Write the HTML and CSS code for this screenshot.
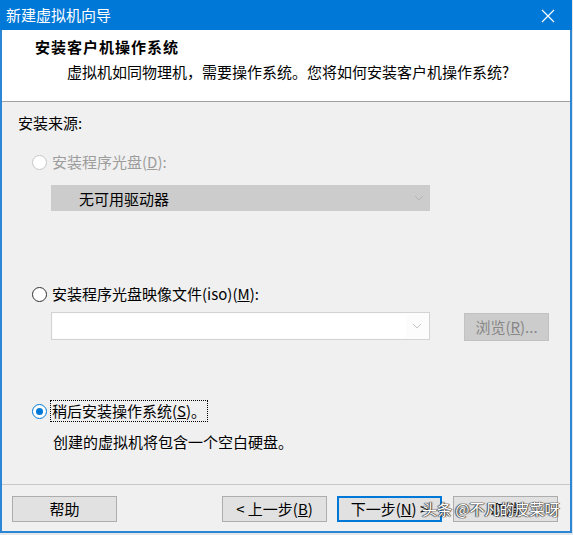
FILE: index.html
```html
<!DOCTYPE html>
<html lang="zh-CN">
<head>
    <meta charset="UTF-8">
    <title>新建虚拟机向导</title>
    <link rel="stylesheet" href="styles.css">
</head>
<body>

    <div class="window">

        <div class="titlebar">
            <span class="title">新建虚拟机向导</span>
            <svg class="close" width="14" height="14" viewBox="0 0 14 14">
                <path d="M1 1 L13 13 M13 1 L1 13" stroke="#fff" stroke-width="1.2" fill="none"/>
            </svg>
        </div>

        <div class="header">
            <h1>安装客户机操作系统</h1>
            <p>虚拟机如同物理机，需要操作系统。您将如何安装客户机操作系统?</p>
        </div>

        <div class="content">

            <p class="label">安装来源:</p>

            <div class="option disabled first">
                <span class="radio"></span>
                <span>安装程序光盘(<u>D</u>):</span>
            </div>

            <div class="select disabled-select">
                <span>无可用驱动器</span>
                <svg class="chev" width="10" height="6" viewBox="0 0 10 6">
                    <path d="M1 1 L5 5 L9 1" stroke="#b4b4b4" fill="none"/>
                </svg>
            </div>

            <div class="option second">
                <span class="radio"></span>
                <span>安装程序光盘映像文件(iso)(<u>M</u>):</span>
            </div>

            <div class="iso-row">
                <div class="combo">
                    <div class="field"></div>
                    <div class="arrow">
                        <svg width="10" height="6" viewBox="0 0 10 6">
                            <path d="M1 1 L5 5 L9 1" stroke="#c4c4c4" fill="none"/>
                        </svg>
                    </div>
                </div>
                <div class="browse">浏览(<u>R</u>)...</div>
            </div>

            <div class="option third">
                <span class="radio checked"></span>
                <span class="focus">稍后安装操作系统(<u>S</u>)。</span>
            </div>

            <p class="note">创建的虚拟机将包含一个空白硬盘。</p>

        </div>

        <div class="footer">
            <div class="btn">帮助</div>
            <div class="spacer"></div>
            <div class="btn">&lt; 上一步(<u>B</u>)</div>
            <div class="btn default">下一步(<u>N</u>) &gt;</div>
            <div class="btn">取消</div>
            <span class="watermark">头条 @不凡的皮菜呀</span>
        </div>

    </div>

</body>
</html>
```

FILE: styles.css
```css
html, body {
    margin: 0;
    padding: 0;
    background: #e6e6e6;
}

body {
    width: 573px;
    height: 535px;
    font-family: "Noto Sans CJK SC", "Noto Sans", sans-serif;
    font-size: 15px;
    color: #000;
}

.window {
    width: 568px;
    height: 531px;
    border-left: 2px solid #2b86d6;
    border-right: 2px solid #2b86d6;
    border-bottom: 2px solid #2b86d6;
    background: #f0f0f0;
    display: flex;
    flex-direction: column;
}

.titlebar {
    height: 30px;
    margin: 0 -2px;
    background: #0078d7;
    display: flex;
    align-items: center;
    justify-content: space-between;
    padding: 0 17px 0 6px;
    color: #fff;
    line-height: 30px;
}

.close {
    margin-top: 1px;
}

.header {
    height: 72px;
    background: #fff;
    border-bottom: 1px solid #a0a0a0;
    box-sizing: border-box;
    padding-top: 7px;
}

.header h1 {
    margin: 0 0 0 33px;
    font-size: 15px;
    font-weight: bold;
    line-height: 20px;
    letter-spacing: 1px;
}

.header p {
    margin: 5px 0 0 65px;
    line-height: 20px;
}

.content {
    height: 383px;
    box-sizing: border-box;
    padding: 11px 0 0 16px;
    border-bottom: 1px solid #c8c8c8;
}

.content p {
    margin: 0;
    line-height: 20px;
}

.option {
    display: flex;
    align-items: center;
    gap: 5px;
    margin-left: 14px;
    line-height: 20px;
}

.option.first {
    margin-top: 19px;
}

.option.second {
    margin-top: 73px;
}

.option.third {
    margin-top: 60px;
}

.disabled {
    color: #9d9d9d;
}

.radio {
    width: 13px;
    height: 13px;
    border: 1px solid #333;
    border-radius: 50%;
    background: #fff;
    position: relative;
}

.disabled .radio {
    border-color: #c6c6c6;
}

.radio.checked {
    border-color: #0078d7;
}

.radio.checked::after {
    content: "";
    position: absolute;
    left: 3px;
    top: 3px;
    width: 7px;
    height: 7px;
    border-radius: 50%;
    background: #0078d7;
}

.focus {
    outline: 1px dotted #000;
    outline-offset: 0;
    padding: 0 1px;
    margin-left: -1px;
}

.select {
    margin: 13px 0 0 33px;
    width: 379px;
    height: 26px;
    box-sizing: border-box;
    display: flex;
    align-items: center;
    justify-content: space-between;
    padding: 0 6px 0 28px;
}

.disabled-select {
    background: #cccccc;
}

.iso-row {
    display: flex;
    margin: 8px 0 0 33px;
}

.combo {
    width: 379px;
    height: 28px;
    box-sizing: border-box;
    border: 1px solid #d3d3d3;
    background: #fcfcfc;
    display: flex;
    padding: 1px;
}

.field {
    flex: 1;
    background: #fff;
}

.arrow {
    width: 22px;
    display: flex;
    align-items: center;
    justify-content: center;
}

.browse {
    margin: 1px 0 0 34px;
    width: 85px;
    height: 28px;
    box-sizing: border-box;
    background: #cccccc;
    border: 1px solid #c2c2c2;
    color: #878787;
    text-align: center;
    line-height: 26px;
}

.note {
    margin: 11px 0 0 35px !important;
}

.footer {
    flex: 1;
    display: flex;
    align-items: flex-start;
    padding: 11px 0 0 10px;
    gap: 11px;
    position: relative;
}

.spacer {
    width: 83px;
}

.btn {
    width: 105px;
    height: 26px;
    box-sizing: border-box;
    background: #e1e1e1;
    border: 1px solid #adadad;
    text-align: center;
    line-height: 24px;
}

.btn.default {
    border: 2px solid #0078d7;
    line-height: 22px;
    margin-left: -1px;
}

.watermark {
    position: absolute;
    left: 420px;
    top: 14px;
    color: #fff;
    font-size: 15px;
    line-height: 20px;
    text-shadow: 0 0 1px #333, 0 0 1px #333, 1px 0 1px #555, -1px 0 1px #555;
}
```
